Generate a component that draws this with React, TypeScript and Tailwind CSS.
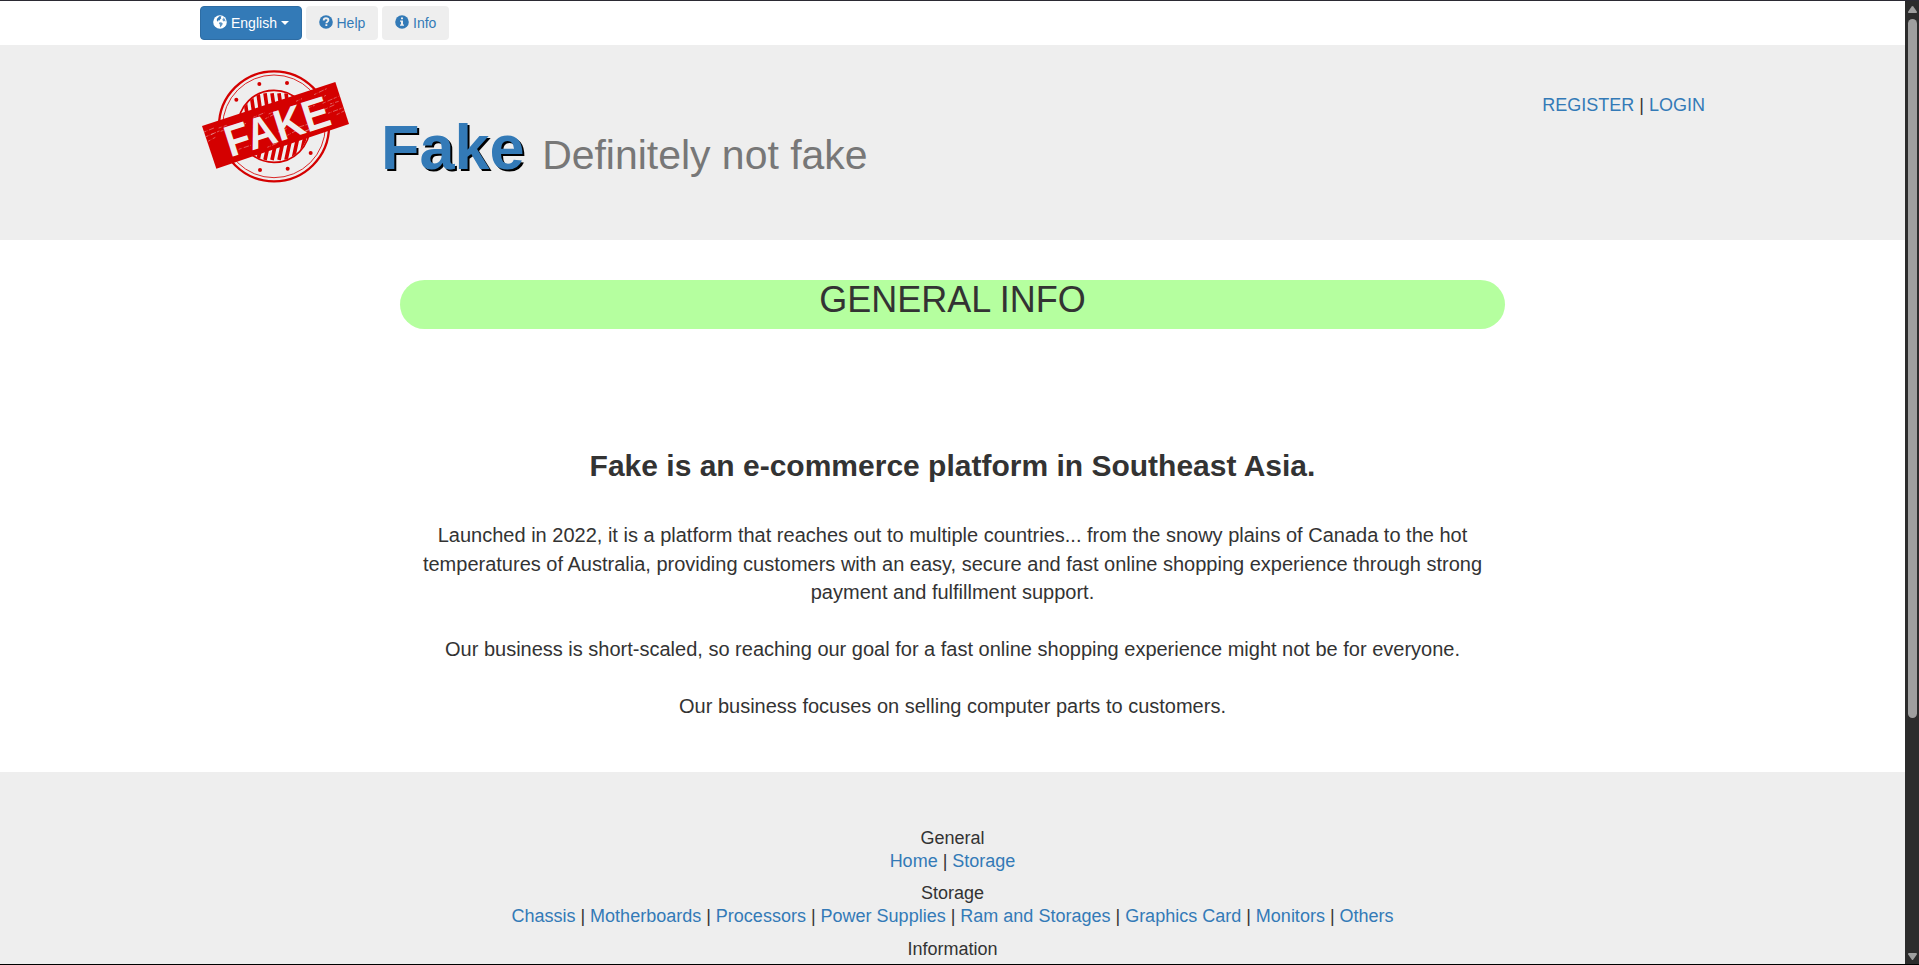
import React from 'react';

const link = 'text-[#337ab7]';

function GlobeIcon() {
  return (
    <svg className="h-[14px] w-[14px]" viewBox="0 0 14 14">
      <circle cx="7" cy="7" r="6.8" fill="#fff" />
      <path d="M6.200 1.300 8.600 1.200 7.800 2.300 8.300 3.200 7.200 4.300 6.700 5.400 5.500 5.200 4.900 6 5.400 6.800 4.300 6.300 3.700 5 4.300 3.300 5.200 2.600z" fill="#337ab7" />
      <path d="M10.300 2.300 12 4.200 12.600 6.600 11.500 6 10.600 6.400 9.600 5.300 9.400 4 10.400 3.500z" fill="#337ab7" opacity="0.75" />
      <path d="M6.200 7.400 8 7.200 9.700 8.300 9.300 9.900 8.300 11 7.600 12.600 6.900 11.200 6.900 9.600 5.900 8.600z" fill="#337ab7" opacity="0.8" />
    </svg>
  );
}

function QuestionIcon() {
  return (
    <svg className="h-[14px] w-[14px]" viewBox="0 0 14 14">
      <circle cx="7" cy="7" r="6.8" fill="#337ab7" />
      <path d="M4.700 5.400c0-1.500 1-2.200 2.300-2.200s2.400.7 2.400 1.900c0 1.600-2 1.600-2 3.100" fill="none" stroke="#eee" strokeWidth="1.9" />
      <rect x="6.400" y="9.200" width="1.900" height="1.800" fill="#eee" />
    </svg>
  );
}

function InfoIcon() {
  return (
    <svg className="h-[14px] w-[14px]" viewBox="0 0 14 14">
      <circle cx="7" cy="7" r="6.8" fill="#337ab7" />
      <path d="M6 2.400h2v1.900H6zM5 5.400h3v4h1v1.400H5V9.400h1V6.700H5z" fill="#eee" />
    </svg>
  );
}

const upperBars = [168, 189, 210, 231, 252, 273, 294, 315, 336];
const dots = [
  [208, 72], [291, 69], [139, 119], [362, 279], [293, 326], [210, 330],
];
const scratches = [
  'M42 216l30-12M48 230l42-18M62 224l14-6M54 244l22-12M86 204l24-8M92 214l14-5',
  'M372 104l38-18M388 116l20-10M398 130l50-22M420 132l26-8M404 148l30-14M414 160l54-20M440 164l24-12',
  'M190 172l34-14M200 180l14-6M226 176l40-20M236 162l18-8M264 216l26-10M292 226l30-16M312 206l44-14',
  'M146 200l22-10M328 222l50-24M354 144l20-8M146 268l36-12M318 124l18-8M346 214l24-8M232 262l28-12',
];

function StampLogo() {
  return (
    <svg className="h-[130px] w-[170px] shrink-0" viewBox="0 0 510 390">
      <defs>
        <clipPath id="core">
          <circle cx="252" cy="199" r="106" />
        </clipPath>
      </defs>
      <g fill="none" stroke="#d40000">
        <circle cx="252" cy="199" r="165" strokeWidth="7" />
        <circle cx="252" cy="199" r="154" strokeWidth="2.5" />
        <circle cx="252" cy="199" r="108" strokeWidth="5" />
      </g>
      <g clipPath="url(#core)" stroke="#d40000" strokeWidth="11">
        {upperBars.map((x) => (
          <path key={x} d={`M${x - 6} 100l12 84M${x - 6} 300l18-84`} />
        ))}
      </g>
      {dots.map(([x, y]) => (
        <circle key={x} cx={x} cy={y} r="6" fill="#d40000" />
      ))}
      <path d="M36 198 436 66l41 126L79 326z" fill="#d40000" />
      {scratches.map((d) => (
        <path key={d} d={d} stroke="#eee" strokeOpacity="0.6" strokeWidth="2" strokeDasharray="7 2 2 5 16 4" />
      ))}
      <text
        transform="translate(121 292) rotate(-17.800)"
        fontFamily="Liberation Sans, Arial, sans-serif"
        fontWeight="700"
        fontSize="131"
        textLength="324"
        lengthAdjust="spacingAndGlyphs"
        fill="#eee"
      >
        FAKE
      </text>
    </svg>
  );
}

function TopBar() {
  return (
    <nav className="flex h-[44px] shrink-0 gap-1 bg-white pt-[5px] pl-[200px] text-[14px] leading-5">
      <button className="flex h-[34px] w-[102px] items-center rounded border border-[#2e6da4] bg-[#337ab7] pl-3 text-white">
        <span className="-mt-0.5"><GlobeIcon /></span>
        <span className="ml-1">English</span>
        <span className="ml-1 border-x-4 border-t-4 border-x-transparent border-t-white" />
      </button>
      <button className={`flex h-[34px] w-[72px] items-center rounded bg-[#eee] pl-[12.500px] ${link}`}>
        <span className="-mt-0.5"><QuestionIcon /></span>
        <span className="ml-1">Help</span>
      </button>
      <button className={`flex h-[34px] w-[67px] items-center rounded bg-[#eee] pl-[13px] ${link}`}>
        <span className="-mt-0.5"><InfoIcon /></span>
        <span className="ml-1">Info</span>
      </button>
    </nav>
  );
}

function Header() {
  return (
    <header className="flex h-[195px] shrink-0 items-start bg-[#eee] pr-[200px] pl-[190px]">
      <div className="pt-[15px]"><StampLogo /></div>
      <h1 className="mt-[68px] ml-[21px] text-[63px] leading-[69.3px] font-bold whitespace-nowrap">
        <a className={`${link} [text-shadow:2px_2px_#000]`}>Fake</a>{' '}
        <small className="text-[65%] leading-none font-normal text-[#777]">Definitely not fake</small>
      </h1>
      <div className="mt-[49px] ml-auto text-[18px] leading-[23px]">
        <a className={link}>REGISTER</a> | <a className={link}>LOGIN</a>
      </div>
    </header>
  );
}

function Content() {
  return (
    <main className="flex h-[532px] shrink-0 flex-col items-center bg-white pt-10 text-center">
      <h2 className="h-[49px] w-[1105px] rounded-[25px] bg-[#b5ff9f] text-[36px] leading-[39.6px]">GENERAL INFO</h2>
      <h3 className="mt-[120px] text-[30px] leading-[33px] font-bold">
        Fake is an e-commerce platform in Southeast Asia.
      </h3>
      <div className="mt-[39px] flex w-[1075px] flex-col gap-[28.57px] text-[20px] leading-[28.57px]">
        <p>
          Launched in 2022, it is a platform that reaches out to multiple countries... from the snowy plains of Canada
          to the hot temperatures of Australia, providing customers with an easy, secure and fast online shopping
          experience through strong payment and fulfillment support.
        </p>
        <p>
          Our business is short-scaled, so reaching our goal for a fast online shopping experience might not be for
          everyone.
        </p>
        <p>Our business focuses on selling computer parts to customers.</p>
      </div>
    </main>
  );
}

const groups = [
  { title: 'General', links: ['Home', 'Storage'] },
  {
    title: 'Storage',
    links: [
      'Chassis', 'Motherboards', 'Processors', 'Power Supplies',
      'Ram and Storages', 'Graphics Card', 'Monitors', 'Others',
    ],
  },
  { title: 'Information', links: [] },
];

function Footer() {
  return (
    <footer className="flex min-h-0 grow flex-col gap-[10px] overflow-hidden bg-[#eee] pt-[54.700px] text-center text-[18px] leading-[22.857px]">
      {groups.map((group) => (
        <div key={group.title} className="shrink-0">
          <p>{group.title}</p>
          <p>
            {group.links.map((name, i) => (
              <React.Fragment key={name}>
                {i > 0 && ' | '}
                <a className={link}>{name}</a>
              </React.Fragment>
            ))}
          </p>
        </div>
      ))}
    </footer>
  );
}

function Scrollbar() {
  return (
    <aside className="flex w-[14px] shrink-0 flex-col bg-[#2c2c2c] pl-[3px]">
      <svg className="mt-[5px] h-[7px] w-[9px]" viewBox="0 0 9 7">
        <path d="M3.700.6Q4.500-.4 5.300.6L8.800 5.500Q9.200 7 8 7H1Q-.2 7 .2 5.500z" fill="#9f9f9f" />
      </svg>
      <div className="mt-[6px] h-[699px] w-[9px] rounded-full bg-[#9f9f9f]" />
      <svg className="mt-auto mb-[4px] h-[7px] w-[9px]" viewBox="0 0 9 7">
        <path d="M3.700 6.400Q4.500 7.400 5.300 6.400L8.800 1.500Q9.200 0 8 0H1Q-.2 0 .2 1.500z" fill="#9f9f9f" />
      </svg>
    </aside>
  );
}

export default function App() {
  return (
    <div className="flex h-[965px] w-[1919px] overflow-hidden border-t border-b border-t-[#2b2a33] border-b-black font-['Liberation_Sans',Arial,sans-serif] text-[#333]">
      <div className="flex min-w-0 grow flex-col">
        <TopBar />
        <Header />
        <Content />
        <Footer />
      </div>
      <Scrollbar />
    </div>
  );
}
